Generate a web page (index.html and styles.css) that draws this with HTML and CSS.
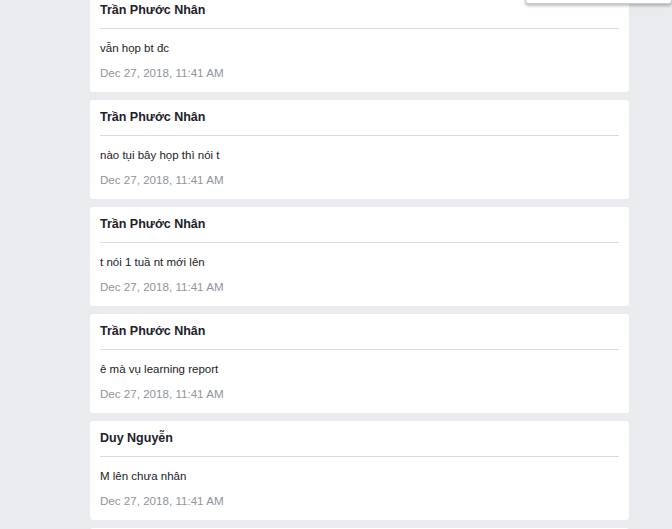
FILE: index.html
```html
<!DOCTYPE html>
<html lang="vi">
<head>
<meta charset="utf-8">
<title>Messages</title>
<link rel="stylesheet" href="styles.css">
</head>
<body>
<div class="menu"></div>
<main class="list">
  <article class="card">
    <header class="name">Trần Phước Nhân</header>
    <p class="msg">vẫn họp bt đc</p>
    <p class="date">Dec 27, 2018, 11:41 AM</p>
  </article>
  <article class="card">
    <header class="name">Trần Phước Nhân</header>
    <p class="msg">nào tụi bây họp thì nói t</p>
    <p class="date">Dec 27, 2018, 11:41 AM</p>
  </article>
  <article class="card">
    <header class="name">Trần Phước Nhân</header>
    <p class="msg">t nói 1 tuầ nt mới lên</p>
    <p class="date">Dec 27, 2018, 11:41 AM</p>
  </article>
  <article class="card">
    <header class="name">Trần Phước Nhân</header>
    <p class="msg">ê mà vụ learning report</p>
    <p class="date">Dec 27, 2018, 11:41 AM</p>
  </article>
  <article class="card">
    <header class="name">Duy Nguyễn</header>
    <p class="msg">M lên chưa nhân</p>
    <p class="date">Dec 27, 2018, 11:41 AM</p>
  </article>
  <article class="card card-last"></article>
</main>
</body>
</html>
```

FILE: styles.css
```css
html, body {
  margin: 0;
  padding: 0;
}
body {
  background: #e9ebee;
  font-family: "Liberation Sans", Arial, sans-serif;
  color: #1d2129;
  overflow: hidden;
  height: 529px;
  position: relative;
}
.list {
  width: 539px;
  margin: -7px 0 0 90px;
  display: flex;
  flex-direction: column;
  gap: 8px;
}
.card {
  background: #fff;
  border-radius: 3px;
  padding: 0 10px;
  height: 99px;
  box-sizing: border-box;
  flex-shrink: 0;
}
.name {
  font-size: 12.5px;
  font-weight: bold;
  line-height: 16px;
  padding: 9px 0 10px;
  border-bottom: 1px solid #dadde1;
}
.msg {
  margin: 11px 0 0;
  font-size: 11.5px;
  line-height: 16px;
}
.date {
  margin: 9px 0 0;
  font-size: 11.6px;
  line-height: 16px;
  color: #90949c;
}
.menu {
  position: absolute;
  left: 525px;
  top: -100px;
  width: 145px;
  height: 102px;
  background: #fff;
  border: 1px solid #c9ccd1;
  border-radius: 0 0 3px 3px;
  box-shadow: 0 2px 3px rgba(0, 0, 0, 0.25);
  z-index: 2;
}
```
